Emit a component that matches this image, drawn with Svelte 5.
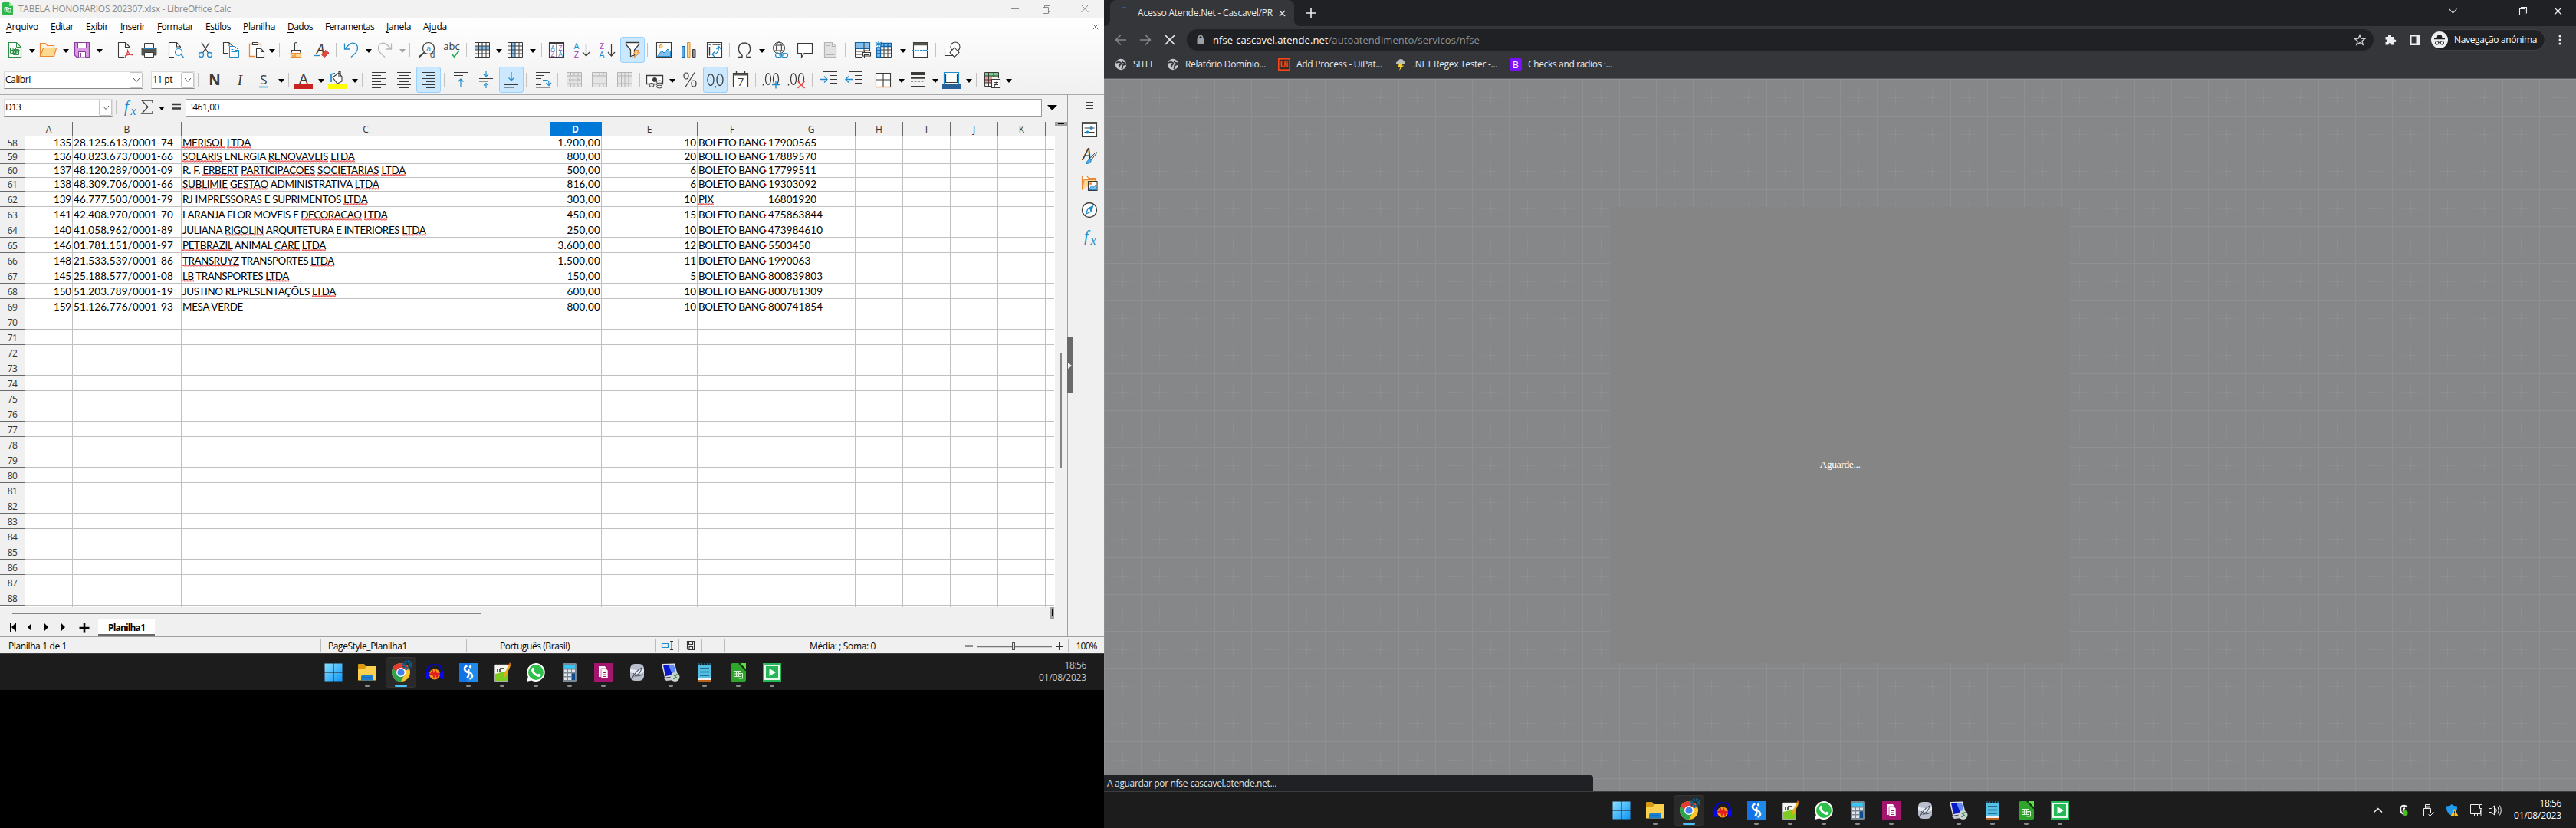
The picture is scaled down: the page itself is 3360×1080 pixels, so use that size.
<script>
  // Spreads or tightens letters so a label fills the given width.
  function fit(node, width) {
    const natural = node.getBoundingClientRect().width;
    const n = node.textContent.length;
    if (width && n) node.style.letterSpacing = `${(width - natural) / n}px`;
  }

  // Turns centre positions into flow margins.
  function layout(items, start) {
    let x = start;
    return items.map(([kind, centre, active]) => {
      const w = kind === 'sep' ? 1 : kind === 'drop' || kind === 'dropoff' ? 8 : 32;
      const left = centre - w / 2;
      const gap = left - x;
      x = left + w;
      return { kind, gap, active };
    });
  }

  const D = '#3a3a38', B = '#1e8bcd', G = '#b4b4b4';
  const s = (c, d, w = 1, f = 'none') => `<path d="${d}" fill="${f}" stroke="${c}" stroke-width="${w}"/>`;
  const t = (x, y, size, c, str, extra = '') => `<text x="${x}" y="${y}" font-size="${size}" fill="${c}" text-anchor="middle" ${extra}>${str}</text>`;
  const serif = 'font-family="Liberation Serif" font-style="italic"';

  const icons = {
    new: s('#2f8f46', 'M4.5 2.500H14.500L20.500 8.500V21.500H4.500Z', 1.2, '#fff') + s('#2f8f46', 'M14.500 2.500V8.500H20.500') + s('#2f8f46', 'M6.500 9.500H13.500V16.500H6.500ZM6.500 12.500H18.500M10 9.500V17M10.500 11.500H17.500V18.500H10.500ZM14 11.500V18.500M10.500 15H17.500'),
    open: s('#ed8733', 'M2.500 20.500V3.500H9.500L11.500 6.500H20.500V9.500', 1.2, '#fdf3e0') + s('#ed8733', 'M2.500 20.500L6.500 9.500H23.500L20.500 20.500Z', 1.2, '#fbd98f'),
    save: s('#8b3d9c', 'M2.500 2.500H21.500V21.500H5L2.500 19Z', 1.2, '#d99be4') + s('#8b3d9c', 'M6.500 2.500H17.500V9.500H6.500Z', 1, '#fff') + s('#8b3d9c', 'M7.500 21.500V14.500H16.500V21.500M10.500 16V21', 1, '#fff'),
    pdf: s(D, 'M3.500 21.500V2.500H12.500L18.500 8.500V13M3.500 21.500H11M12.500 2.500V8.500H18.500', 1.1, '#fff') + s('#d93a3a', 'M12 22C14 19 16 14 15.500 11.500M15.500 12C16 16 18 18.500 22 19M12 20C15 18 18 17.500 22 18.500', 1.2),
    print: s(D, 'M6.500 9V3.500H18.500V9') + s('#56544e', 'M3 9.500H22V19H3Z', 1, '#56544e') + s(B, 'M5 10H20', 1.8) + s(D, 'M6.500 15.500H18.500V21.500H6.500Z', 1, '#fff'),
    preview: s(D, 'M10 21.500H3.500V2.500H13.500L18.500 8V10M13.500 2.500V8H18.500', 1.1, '#fff') + `<circle cx="16" cy="15" r="4.500" fill="#fff" stroke="${B}" stroke-width="1.200"/>` + s(B, 'M19 18L22.500 22', 1.4),
    cut: s(D, 'M7 2.500L15.500 16M17 2.500L8.500 16', 1.3) + `<circle cx="6.500" cy="18.500" r="3" fill="none" stroke="${B}" stroke-width="1.300"/><circle cx="17.500" cy="18.500" r="3" fill="none" stroke="${B}" stroke-width="1.300"/>`,
    copy: s(D, 'M8.500 16.500H2.500V2.500H9.500L14.500 7', 1.1, '#fff') + s(D, 'M10 2.500V7') + s(B, 'M10.500 7.500H17.500L22.500 12.500V21.500H10.500ZM17.500 7.500V12.500H22.500M12.500 11.500H15.500M12.500 14.500H20.500M12.500 17.500H20.500', 1, '#fff'),
    paste: s('#ed8733', 'M10 20.500H3.500V4.500H18.500V8', 1.3, '#fff') + s(D, 'M7.500 5.500V2.500H14.500V5.500Z', 1.1, '#fff') + s(D, 'M12.500 10.500H18.500L22.500 14.500V21.500H12.500ZM18.500 10.500V14.500H22.500', 1.1, '#fff'),
    clone: s(D, 'M10.500 12V4C10.500 2 13.500 2 13.500 4V12M6.500 15.500V12.500H17.500V15.500', 1.1, '#fff') + s('#ed8733', 'M5.500 21.500V16.500H18.500V21.500ZM11 18V21.500M8 19V21.500', 1.2, '#fbd98f'),
    clear: t(11, 17, 18, D, 'A', 'font-style="italic"') + s(B, 'M2.500 19.500H10', 1.3) + s('#d93a3a', 'M12.500 18.500L17.500 12.500L22 16L16.500 21.500Z', 1, '#e04848'),
    undo: s(B, 'M3.500 3.500V11H11M4 10.500L10 4.500C14 1.500 20 3.500 20.500 9C20.800 14 17 17 12 21.500', 1.3),
    redo: s(G, 'M20.500 3.500V11H13M20 10.500L14 4.500C10 1.500 4 3.500 3.500 9C3.200 14 7 17 12 21.500', 1.3),
    find: `<circle cx="14" cy="10" r="7.500" fill="none" stroke="${D}" stroke-width="1.200"/>` + s(D, 'M8.500 15.500L1.500 21.500', 2) + t(14, 13.500, 11, B, 'a') + t(19, 22, 11, D, 'd'),
    spell: t(12, 12, 13, D, 'abc') + s('#18ab50', 'M12 17L15.500 21L22 13', 1.7),
    row: s('#83beec', 'M2 7H22V12H2Z', 0, '#83beec') + s(D, 'M2.500 2.500H21.500V21.500H2.500ZM2.500 7H21.500M2.500 12H21.500M2.500 17H21.500M7.500 2.500V21.500M12 2.500V21.500M17 2.500V21.500'),
    col: s('#83beec', 'M7 2H12V22H7Z', 0, '#83beec') + s(D, 'M2.500 2.500H21.500V21.500H2.500ZM2.500 7H21.500M2.500 12H21.500M2.500 17H21.500M7.500 2.500V21.500M12 2.500V21.500M17 2.500V21.500'),
    sort: s(D, 'M2.500 2.500H21.500V21.500H2.500ZM12 4V21.500', 1.1, '#fff') + s(D, 'M2.500 3.500H21.500', 2) + t(7, 13, 9, B, 'A') + t(7, 21, 9, '#a13fb5', 'Z') + t(17, 13, 9, '#a13fb5', 'Z') + t(17, 21, 9, B, 'A'),
    az: t(5, 11, 11, B, 'A') + t(5, 22, 11, '#a13fb5', 'Z') + s(D, 'M17.500 4V19M13 15L17.500 20L22 15', 1.2),
    za: t(5, 11, 11, '#a13fb5', 'Z') + t(5, 22, 11, B, 'A') + s(D, 'M17.500 4V19M13 15L17.500 20L22 15', 1.2),
    filter: s(D, 'M3.500 2.500H20.500V5L14.500 12V19L9.500 20.500V12L3.500 5Z', 1.3, '#fff') + s('#ed8733', 'M16 12.500H20.500L18.500 16H21.500L14 22L16 17.500H13.500Z', 1, '#fbd98f'),
    image: s(D, 'M2.500 2.500H21.500V21.500H2.500Z', 1.1, '#fff') + s(B, 'M3.500 20.500L9 13L12 16L17 11L20.500 14.500V20.500Z', 1, '#83beec') + `<circle cx="8" cy="7.500" r="2" fill="#fbd98f" stroke="#ed8733"/>`,
    chart: s('#0f63a8', 'M3.500 7.500H7V21.500H3.500Z', 1, '#5aa8de') + s('#ed8733', 'M10.500 2.500H14V21.500H10.500Z', 1, '#fbd98f') + s(D, 'M17.500 11.500H21V21.500H17.500Z', 1, '#8a8a86'),
    pivot: s(D, 'M2.500 2.500H21.500V21.500H2.500Z', 1.1, '#fff') + s(D, 'M4.500 5H7M9.500 5H19.500M5.500 8V19.500', 1.4) + s(B, 'M9.500 18C14 18 17.500 15 17.500 8M14.500 11L17.500 7.500L20.500 11M12 14.500L9 18L12 21', 1.2),
    omega: s(D, 'M3 21.500H9V19C2 14 3 3 12 3S22 14 15 19V21.500H21', 1.4),
    link: `<circle cx="11" cy="9.500" r="7.500" fill="none" stroke="${D}"/><ellipse cx="11" cy="9.500" rx="3.500" ry="7.500" fill="none" stroke="${D}"/>` + s(D, 'M3.500 9.500H18.500M4.500 6H17.500M4.500 13H17.500') + `<rect x="6.500" y="16.500" width="8" height="5" rx="2.500" fill="#fff" stroke="${B}" stroke-width="1.200"/><rect x="14.500" y="16.500" width="8" height="5" rx="2.500" fill="#fff" stroke="${B}" stroke-width="1.200"/>` + s(B, 'M11 19H18', 1.2),
    comment: s(D, 'M2.500 3.500H21.500V16.500H11L7.500 21.500V16.500H2.500Z', 1.2, '#fff'),
    header: s(G, 'M4.500 2.500H14.500L19.500 7.500V21.500H4.500ZM14.500 2.500V7.500H19.500M6.500 6.500H12M6.500 18.500H17.500', 1.2, '#e2e2e2'),
    prange: s('#0f63a8', 'M2.500 2.500H21.500V10.500H2.500Z', 1.2, '#83beec') + s(D, 'M2.500 10.500V21.500H11M2.500 14H14M2.500 18H11M7.500 10.500V21.500M14 2.500V14M21.500 10.500V13') + s(D, 'M12.500 15.500H22.500V20H12.500ZM14.500 13H20.500V15.500H14.500ZM14.500 18.500H20.500V22.500H14.500Z', 1.1, '#fff'),
    freeze: s(D, 'M7.500 7.500H21.500V21.500H7.500M7.500 12H21.500M7.500 17H21.500M12 3V21.500M17 3V21.500') + s('#0f63a8', 'M8 3.500H21.500V7.500H8ZM2.500 9H7.500V21.500H2.500ZM12 3.500V7.500M17 3.500V7.500M2.500 13H7.500M2.500 17H7.500', 1.3, '#83beec') + s(B, 'M5 0V9M1 2L9 7M9 2L1 7', 1.2),
    split: s(D, 'M3.500 12V2.500H21.500V12M3.500 14V21.500H21.500V14', 1.1, '#fff') + s('#56544e', 'M3.500 4.500H21.500', 3.5) + `<path d="M1.500 12.500H23" stroke="${B}" stroke-width="1.200" stroke-dasharray="2.500 1"/>`,
    shapes: s(D, 'M2.500 9.500H12.500V19.500H2.500Z', 1.1, '#fff') + `<circle cx="16" cy="8" r="6" fill="#fff" stroke="${D}" stroke-width="1.100"/>` + s(D, 'M15 9L21 15.500L15 21.500L9 15.500Z', 1.1, '#fff'),
    bold: t(12, 19, 19, D, 'N', 'font-weight="700"'),
    italic: t(12, 19, 19, D, 'I', serif),
    under: t(12, 18, 17, D, 'S') + s(B, 'M6 21.500H18', 1.6),
    acolor: t(12, 17, 18, D, 'A') + '<rect x="0" y="18" width="24" height="6" fill="#c9211e"/>',
    hilite: '<rect x="0" y="18" width="24" height="6" fill="#ffff00"/>' + s(D, 'M6 9L14 3L18 8V14L12 17ZM14 8V1.500H16V8', 1.1, '#fff') + s(B, 'M4 15V5L9 3.500', 1.7),
    al: s(D, 'M3 2.500H21M3 6.500H15M3 10.500H21M3 14.500H15M3 18.500H21M3 22.500H15', 1.2),
    ac: s(D, 'M3 2.500H21M6 6.500H18M3 10.500H21M6 14.500H18M3 18.500H21M6 22.500H18', 1.2),
    ar: s(D, 'M3 2.500H21M9 6.500H21M3 10.500H21M9 14.500H21M3 18.500H21M9 22.500H21', 1.2),
    vt: s(D, 'M3 2.500H21M3 6.500H15', 1.2) + s(B, 'M12 22V11M8.500 14.500L12 11L15.500 14.500', 1.2),
    vm: s(D, 'M3 10.500H21M3 14H15', 1.2) + s(B, 'M12 1V8M9 5L12 8L15 5M12 23V16.500M9 19.500L12 16.500L15 19.500', 1.2),
    vb: s(D, 'M3 18.500H21M3 22H15', 1.2) + s(B, 'M12 2V13M8.500 9.500L12 13L15.500 9.500', 1.2),
    wrap: s(D, 'M3 2.500H21M3 6.500H14M3 10.500H10M3 18.500H10M3 22H21', 1.2) + s(B, 'M12 12.500H17C20 12.500 20 14 20 19M16.500 16L20 19.500L23 16', 1.2),
    m1: s(G, 'M2.500 2.500H21.500V21.500H2.500ZM2.500 7H21.500M2.500 17H21.500M7.500 2.500V7M12 2.500V7M17 2.500V7M7.500 17V21.500M12 17V21.500M17 17V21.500M5 12H19M8 9.500L5 12L8 14.500M16 9.500L19 12L16 14.500', 1, '#e4e4e4'),
    m2: s(G, 'M2.500 2.500H21.500V21.500H2.500ZM2.500 7H21.500M2.500 17H21.500M7.500 2.500V7M12 2.500V7M17 2.500V7M7.500 17V21.500M12 17V21.500M17 17V21.500', 1, '#e4e4e4'),
    m3: s(G, 'M2.500 2.500H21.500V21.500H2.500ZM2.500 7H21.500M2.500 17H21.500M7.500 2.500V21.500M12 2.500V21.500M17 2.500V21.500', 1, '#e4e4e4'),
    money: s(D, 'M1.500 6.500H22.500V17.500H1.500Z', 1.3, '#fff') + `<circle cx="12" cy="12" r="3" fill="${D}"/><ellipse cx="8" cy="19" rx="3" ry="2.500" fill="#ddd" stroke="${D}"/><ellipse cx="18" cy="15" rx="3.500" ry="2" fill="#fff" stroke="${D}"/><ellipse cx="18" cy="18" rx="3.500" ry="2" fill="#fff" stroke="${D}"/><ellipse cx="18" cy="21" rx="3.500" ry="2" fill="#fff" stroke="${D}"/>`,
    pct: s(D, 'M18 2.500L6 21.500', 1.2) + `<ellipse cx="7" cy="7" rx="3" ry="4" fill="none" stroke="${D}" stroke-width="1.200"/><ellipse cx="17" cy="17" rx="3" ry="4" fill="none" stroke="${D}" stroke-width="1.200"/>`,
    num: `<ellipse cx="6" cy="12" rx="4" ry="7.500" fill="none" stroke="${D}" stroke-width="1.300"/><ellipse cx="18" cy="12" rx="4" ry="7.500" fill="none" stroke="${D}" stroke-width="1.300"/>` + s(D, 'M12 20V22.500', 1.5),
    date: s(D, 'M2.500 3.500H21.500V21.500H2.500Z', 1.2, '#fff') + s('#56544e', 'M2.500 5H21.500', 3) + s(D, 'M6.500 1V4M17.500 1V4', 1.4) + t(12, 20, 15, D, '7'),
    dadd: `<ellipse cx="8" cy="11" rx="3.500" ry="7.500" fill="none" stroke="${D}" stroke-width="1.200"/><ellipse cx="18" cy="11" rx="3.500" ry="7.500" fill="none" stroke="${D}" stroke-width="1.200"/>` + s(D, 'M1.500 17V19.500', 1.5) + s(B, 'M18 13.500V23.500M13 18.500H23', 1.4),
    ddel: `<ellipse cx="8" cy="11" rx="3.500" ry="7.500" fill="none" stroke="${D}" stroke-width="1.200"/><ellipse cx="18" cy="11" rx="3.500" ry="7.500" fill="none" stroke="${D}" stroke-width="1.200"/>` + s(D, 'M1.500 17V19.500', 1.5) + s('#ee4444', 'M13.500 14L22.500 23M22.500 14L13.500 23', 1.5),
    ind: s(D, 'M5 1.500H23M13 6.500H23M13 11.500H23M13 16.500H23M5 21.500H23', 1.2) + s(B, 'M1 11.500H10M6 7.500L10 11.500L6 15.500', 1.3),
    outd: s(D, 'M5 1.500H23M13 6.500H23M13 11.500H23M13 16.500H23M5 21.500H23', 1.2) + s(B, 'M1 11.500H10M5 7.500L1 11.500L5 15.500', 1.3),
    border: s(D, 'M2.500 21V3.500H21.500V21M12 3.500V21M2.500 12H21.500', 1.1, '#fff') + s('#ed8733', 'M2 21.500H22', 1.4),
    lstyle: s(D, 'M3 4H21', 4) + s(D, 'M3 9.500H21', 2.5) + `<path d="M3 14H21" stroke="${D}" stroke-dasharray="3 1.500"/>` + s(D, 'M3 21H21', 2) + `<path d="M3 17.500H21" stroke="${D}" stroke-dasharray="1.500 1"/>`,
    bcolor: s(B, 'M2.500 2.500H21.500V18H2.500Z', 1.2, '#fff') + s(D, 'M4.500 4.500H19.500V15.500H4.500Z', 1.2) + '<rect x="0" y="18" width="24" height="6" fill="#2a6099"/>',
    cond: s('#7fc98f', 'M3 3H21V8H3Z', 0, '#7fc98f') + s('#f08a8a', 'M3 8H12V16H3Z', 0, '#f49a9a') + s(D, 'M2.500 2.500H20.500V10M2.500 2.500V20.500H10M2.500 7H20.500M2.500 12H12M2.500 16H10M7.500 2.500V20.500M14 2.500V9') + s(D, 'M11.500 11.500H22.500V22.500H11.500Z', 1.1, '#fff') + s(D, 'M14 15.500H20M14 18.500H20M19 13L15 21'),
    fx: t(8, 18, 21, B, 'f', serif) + t(17, 22, 16, B, 'x', serif),
    sigma: s(D, 'M19 6V3H5L13 11.500L5 20H19V17', 1.3),
    eq: s(D, 'M6 9H18M6 14.500H18', 2.4),
    burger: s(D, 'M7 7.500H17M7 11.500H17M7 15.500H17', 1.2),
    props: s(D, 'M2.500 2.500H21.500V21.500H2.500Z', 1.1, '#fff') + s('#56544e', 'M2.500 3.500H21.500', 3) + s(D, 'M5.500 10H18.500M5.500 15.500H18.500') + `<circle cx="14.500" cy="10" r="2" fill="${B}"/><circle cx="9.500" cy="15.500" r="2" fill="${B}"/>`,
    styles: t(9, 17, 21, D, 'A', 'font-style="italic"') + s(D, 'M22 7L14 17L12 15.500L20 7Z', 1, '#fff') + s(B, 'M14 16C12 15 9 17 7.500 21.500C12 22 15 19 14 16Z', 1, '#5aa8de'),
    gallery: s('#ed8733', 'M2.500 20.500V2.500H8.500L11 5.500H20.500V9', 1.2, '#fff') + s('#ed8733', 'M2.500 20.500L5 7.500H20V10', 1.1, '#fbd98f') + s(D, 'M10.500 9.500H22V21.500H10.500Z', 1.1, '#fff') + s(B, 'M11.500 20.500L15 15L17 17.500L19.500 14.500L21 17V20.500Z', 1, '#83beec') + '<circle cx="13.500" cy="12.500" r="1.500" fill="#ed8733"/>',
    nav: `<circle cx="12" cy="12" r="9.500" fill="#fff" stroke="${D}" stroke-width="1.300"/>` + s(B, 'M16.500 7L14 14L7.500 17L10 10Z', 1.3, '#fff') + `<path d="M16.500 7L14 14L10 10Z" fill="${B}"/><circle cx="12" cy="12" r="1" fill="#fff"/>`
  };

  const app = {
    win: '<defs><linearGradient id="w" x1="0" y1="0" x2="1" y2="1"><stop offset="0" stop-color="#8be0ff"/><stop offset="1" stop-color="#0f95f5"/></linearGradient></defs><path fill="url(#w)" d="M.500 .500H11.500V11.500H.500ZM12.500 .500H23.500V11.500H12.500ZM.500 12.500H11.500V23.500H.500ZM12.500 12.500H23.500V23.500H12.500Z"/>',
    folder: '<path fill="#d79a12" d="M0 2Q0 1 1 1H8L10 4V8H0Z"/><path fill="#fdd04e" d="M0 7H9L11 4H24V22.500H0Z"/><path fill="#1a7fd0" d="M4 22.500V18Q4 15.500 6.500 15.500H17.500Q20 15.500 20 18V22.500Z"/><path fill="#0f5fa8" d="M7 18.500H17V20H7Z"/>',
    chrome: '<circle cx="12" cy="12" r="12" fill="#fbc52c"/><path fill="#e23b30" d="M12 0A12 12 0 0 0 1.600 6L6.800 15L12 7H22.500A12 12 0 0 0 12 0Z"/><path fill="#2fa24f" d="M1.600 6A12 12 0 0 0 12 24L17 14.500L7.500 14Z"/><circle cx="12" cy="12" r="6" fill="#fff"/><circle cx="12" cy="12" r="4.600" fill="#3f82ee"/><circle cx="20.500" cy="2.500" r="4.600" fill="none" stroke="#0b5c86" stroke-width="4" stroke-dasharray="2.400 1.200"/>',
    audacity: '<path d="M2 15V12Q2 2 12 2T22 12V15" fill="none" stroke="#0606c8" stroke-width="2.200"/><ellipse cx="12" cy="14.500" rx="7" ry="7" fill="#f39a1c"/><path d="M5 14H8L9 11L11 17L13 11L15 17L16 14H19" stroke="#e0201c" stroke-width="2.500" fill="none"/><rect x="0" y="11" width="5" height="10" rx="2.500" fill="#0707e8"/><rect x="19" y="11" width="5" height="10" rx="2.500" fill="#0707e8"/>',
    ess: '<rect width="24" height="24" fill="#1273e6"/><path fill="#2a9af0" d="M14 0H24V24H10Z" opacity=".6"/><path d="M10.500 3.500Q6.500 4.500 7 8Q7.500 10.500 11 12Q14 13.500 10.500 19.500M13.500 20.500Q17.500 19.500 17 16Q16.500 13.500 13.500 12Q10.500 10.500 13 8" fill="none" stroke="#fff" stroke-width="2.500"/><circle cx="14.500" cy="4.800" r="1.700" fill="#fff"/>',
    npp: '<path fill="#f4f4f0" d="M2 2H20V24H2Z"/><path fill="#7ecb22" d="M3 14L19 10V23H3Z"/><path d="M3 2H20M2 2V24H20" stroke="#666" fill="none"/><path d="M6 7V12M9 7V12M9 7H14" stroke="#222" stroke-width="1.500" fill="none"/><path d="M22.500 1L15 17.500" stroke="#e9a91c" stroke-width="3"/><path d="M21.500 3L23 0" stroke="#c35a20" stroke-width="3"/>',
    whats: '<path fill="#fff" d="M12 0A12 12 0 1 1 6 22.500L0 24L1.800 18A12 12 0 0 1 12 0Z"/><circle cx="12" cy="12" r="10" fill="#2fbf4b"/><path fill="#fff" d="M7.500 6Q9 5 10 7.500Q10.500 9 9.300 10Q11 13.500 14.300 14.800Q15.500 13 17 14Q19 15 18.500 16Q17 19.500 12.500 17Q7 14 6 9.500Q6 7.500 7.500 6Z"/>',
    calc: '<rect x="3" y="0" width="18" height="24" rx="1.500" fill="#7a8894"/><rect x="5" y="2" width="14" height="4.500" fill="#35c6f4"/><path fill="#dfe5ea" d="M5 8.500H9V12H5ZM10 8.500H14V12H10ZM15 8.500H19V12H15ZM5 13.500H9V17H5ZM10 13.500H14V17H10ZM5 18.500H9V22H5ZM10 18.500H14V22H10Z"/><path fill="#0f4d92" d="M15 13.500H19V22H15Z"/>',
    docs: '<rect width="24" height="24" fill="#a3156f"/><path fill="#fff" d="M6 4H14L16 7V18H6Z"/><path fill="#fff" stroke="#a3156f" stroke-width=".600" d="M9 7H15.500L18 9.500V20H9Z"/><path stroke="#a3156f" d="M11 12.500H16M11 15H16M11 17.500H16"/>',
    db: '<rect x="3" y="1" width="18" height="22" rx="6" fill="#b9bfcb"/><path fill="#e7eaf0" d="M3 7Q12 11 21 7V12Q12 16 3 12Z"/><path d="M5 21Q10 10 18 6Q17 13 10 17Q15 17 20 15M10 17L7 13" fill="none" stroke="#555c6c" stroke-width="1.200"/>',
    remote: '<path fill="#dcdfe6" d="M0 1L17 .500L21 16L4 19Z"/><path fill="#0a18c8" d="M2 2.500L15.500 2L19 14.500L5 17Z"/><path fill="#5f8cf5" d="M9 2.200L15.500 2L19 14.500L14 15Z"/><path fill="#c7cad2" d="M3 20L14 18L16 22L6 23Z"/><circle cx="17.500" cy="18" r="6" fill="#cfd3d6"/><path d="M15.500 15L18.500 18L15.500 21M20.500 14L17.500 17L20.500 20" stroke="#2d9a3c" stroke-width="1.300" fill="none"/>',
    note: '<path fill="#55bfe3" d="M3 2H21V20H3Z"/><path fill="#f1f1f1" d="M3 19.500H21V22H3Z"/><path fill="#b5611a" d="M3 22H21V24H3Z"/><path stroke="#0f5676" stroke-width="1.500" d="M6 7H18M6 11.500H18M6 16H18"/><path stroke="#166a8e" stroke-width="1.500" d="M5 0V3M8.500 0V3M12 0V3M15.500 0V3M19 0V3"/>',
    lo: '<path fill="#2fa52c" d="M5 0H13L22 10V22Q22 24 20 24H4Q2 24 2 22V3Q2 0 5 0Z"/><path fill="#62dd3f" d="M14 0H22V8Z"/><path stroke="#103a10" stroke-width="2" d="M13 0L22 9.500"/><path d="M6.500 10.500H15.500V17.500H6.500ZM6.500 14H15.500M9.500 10.500V17.500M12.500 10.500V17.500M12.500 13.500H17.500V20H12.500" fill="none" stroke="#dcf5d8"/>',
    play: '<rect width="24" height="24" fill="#26b757"/><rect x="3" y="3" width="18" height="18" fill="none" stroke="#fff" stroke-width="1.800"/><path fill="#fff" d="M8.500 7L17 12L8.500 17Z"/>'
  };
  const taskApps = [['win', 0], ['folder', 1], ['chrome', 2], ['audacity', 0], ['ess', 1], ['npp', 1], ['whats', 1], ['calc', 1], ['docs', 1], ['db', 0], ['remote', 1], ['note', 1], ['lo', 1], ['play', 1]];

  const bar1 = layout([['new', 19], ['drop', 42], ['open', 62], ['drop', 86], ['save', 107], ['drop', 130], ['sep', 139.5], ['pdf', 163], ['print', 194], ['preview', 229], ['sep', 246.5], ['cut', 268], ['copy', 301], ['paste', 334], ['drop', 355], ['sep', 364.5], ['clone', 386], ['clear', 419], ['sep', 438.5], ['undo', 458], ['drop', 481], ['redo', 502], ['dropoff', 525], ['sep', 534.5], ['find', 557], ['spell', 589], ['sep', 608.5], ['row', 629], ['drop', 651], ['col', 672], ['drop', 695], ['sep', 706.5], ['sort', 726], ['az', 759], ['za', 792], ['filter', 825, 1], ['sep', 844.5], ['image', 866], ['chart', 898], ['pivot', 932], ['sep', 951.5], ['omega', 971], ['drop', 994], ['link', 1017], ['comment', 1050], ['header', 1083], ['sep', 1102.5], ['prange', 1125], ['freeze', 1153], ['drop', 1178], ['split', 1200], ['sep', 1220.5], ['shapes', 1242]], 0);
  const bar2 = layout([['sep', 258.5], ['bold', 280], ['italic', 313], ['under', 344], ['drop', 367], ['sep', 376.5], ['acolor', 396], ['drop', 419], ['hilite', 440], ['drop', 463], ['sep', 472.5], ['al', 494], ['ac', 527], ['ar', 559, 1], ['sep', 579.5], ['vt', 601], ['vm', 634], ['vb', 667, 1], ['sep', 686.5], ['wrap', 708], ['sep', 727.5], ['m1', 749], ['m2', 782], ['m3', 815], ['sep', 834.5], ['money', 854], ['drop', 877], ['pct', 900], ['num', 933, 1], ['date', 966], ['sep', 985.5], ['dadd', 1006], ['ddel', 1039], ['sep', 1059.5], ['ind', 1081], ['outd', 1114], ['sep', 1133.5], ['border', 1152], ['drop', 1176], ['lstyle', 1197], ['drop', 1220], ['bcolor', 1241], ['drop', 1264], ['sep', 1273.5], ['cond', 1294], ['drop', 1316]], 254);

  // label before, access key, label after, width
  const menus = [['', 'A', 'rquivo', 42], ['', 'E', 'ditar', 30], ['E', 'x', 'ibir', 29], ['', 'I', 'nserir', 32], ['', 'F', 'ormatar', 47], ['E', 's', 'tilos', 33], ['', 'P', 'lanilha', 42], ['', 'D', 'ados', 33], ['Ferramen', 't', 'as', 64], ['', 'J', 'anela', 32], ['Aj', 'u', 'da', 31]];

  const cols = ['A', 'B', 'C', 'D', 'E', 'F', 'G', 'H', 'I', 'J', 'K', ''];
  const BB = 'BOLETO BANC';
  // Words starting with ~ carry the spelling underline.
  const data = [
    ['135', '28.125.613/0001-74', '~MERISOL ~LTDA', 89, '1.900,00', '10', BB, '17900565'],
    ['136', '40.823.673/0001-66', '~SOLARIS ENERGIA ~RENOVAVEIS ~LTDA', 224.5, '800,00', '20', BB, '17889570'],
    ['137', '48.120.289/0001-09', 'R. F. ~ERBERT ~PARTICIPACOES ~SOCIETARIAS ~LTDA', 291, '500,00', '6', BB, '17799511'],
    ['138', '48.309.706/0001-66', '~SUBLIMIE ~GESTAO ADMINISTRATIVA ~LTDA', 256.5, '816,00', '6', BB, '19303092'],
    ['139', '46.777.503/0001-79', 'RJ IMPRESSORAS E SUPRIMENTOS ~LTDA', 241.5, '303,00', '10', '~PIX', '16801920'],
    ['141', '42.408.970/0001-70', 'LARANJA FLOR MOVEIS E ~DECORACAO ~LTDA', 267.5, '450,00', '15', BB, '475863844'],
    ['140', '41.058.962/0001-89', 'JULIANA ~RIGOLIN ARQUITETURA E INTERIORES ~LTDA', 317.5, '250,00', '10', BB, '473984610'],
    ['146', '01.781.151/0001-97', '~PETBRAZIL ANIMAL ~CARE ~LTDA', 187, '3.600,00', '12', BB, '5503450'],
    ['148', '21.533.539/0001-86', '~TRANSRUYZ TRANSPORTES ~LTDA', 198, '1.500,00', '11', BB, '1990063'],
    ['145', '25.188.577/0001-08', '~LB TRANSPORTES ~LTDA', 139, '150,00', '5', BB, '800839803'],
    ['150', '51.203.789/0001-19', 'JUSTINO REPRESENTAÇÕES ~LTDA', 200, '600,00', '10', BB, '800781309'],
    ['159', '51.126.776/0001-93', 'MESA VERDE', 79, '800,00', '10', BB, '800741854']
  ];
  const rows = Array.from({ length: 31 }, (_, i) => {
    const r = data[i];
    return {
      n: 58 + i,
      short: i < 4,
      cells: r
        ? [[r[0], 23, 1], [r[1], 130], [r[2], r[3]], [r[4], r[4].length > 6 ? 55.5 : 43.5, 1], [r[5], r[5].length * 7.7, 1], [r[6], r[6] === BB ? 87 : 19.5], [r[7], r[7].length * 7.9], [''], [''], [''], [''], ['']]
        : cols.map(() => [''])
    };
  });
  const words = (str) => str.split(' ').map((w, i) => ({ sp: i ? ' ' : '', bad: w[0] === '~', w: w.replace('~', '') }));
</script>

{#snippet tools(list)}
  {#each list as it}
    {#if it.kind === 'sep'}
      <i class="sep" style="margin-left:{it.gap}px"></i>
    {:else if it.kind === 'drop' || it.kind === 'dropoff'}
      <i class="drop" class:off={it.kind === 'dropoff'} style="margin-left:{it.gap}px"></i>
    {:else}
      <span class="tool" class:active={it.active} style="margin-left:{it.gap}px">
        <svg viewBox="0 0 24 24">{@html icons[it.kind]}</svg>
      </span>
    {/if}
  {/each}
{/snippet}

{#snippet ico(name)}<svg class="ic" viewBox="0 0 24 24">{@html icons[name]}</svg>{/snippet}

{#snippet chev()}<span class="chev"><svg viewBox="0 0 10 10"><path d="M1 3L5 7.500L9 3" fill="none" stroke="#555" /></svg></span>{/snippet}

{#snippet apps()}
  <div class="apps">
    {#each taskApps as [name, state]}
      <div class="app" class:current={state === 2}>
        <svg viewBox="0 0 24 24">{@html app[name]}</svg>
        <i class="dot" class:none={!state} class:long={state === 2}></i>
      </div>
    {/each}
  </div>
{/snippet}

{#snippet globe()}<svg class="fav" viewBox="0 0 16 16"><circle cx="8" cy="8" r="7.200" fill="#c4c7cb" /><path d="M2 6Q5 4 8 6Q9 8 6 9Q7 11 5 12M10 3Q9 5 12 6Q14 6 14 8Q11 8 10 10Q11 12 9 14" fill="none" stroke="#35363a" stroke-width="1.800" /></svg>{/snippet}

<div class="desktop">
  <section class="left">
    <header class="title">
      <svg class="doc" viewBox="0 0 14 17"><path fill="#2db84b" d="M1 0H9L14 5V15Q14 17 12 17H2Q0 17 0 15V1Z" /><path fill="#8be29b" d="M9 0L14 5H9Z" /><path d="M3 6.500H8V12H3ZM3 9H8M5.500 6.500V12M7 8.500H11V13H7Z" fill="none" stroke="#fff" stroke-width=".800" /></svg>
      <span class="ttext" use:fit={277}>TABELA HONORARIOS 202307.xlsx - LibreOffice Calc</span>
      <svg class="wc" viewBox="0 0 110 16"><path d="M2 8.500H12M43.500 6.500H50.500V14.500H43.500ZM45.500 6V4.500H52.500V12.500H51M93.500 3.500L102.500 13M102.500 3.500L93.500 13" fill="none" stroke="#8b8b8b" /></svg>
    </header>
    <div class="chromebar">
      <nav class="menu">
        {#each menus as [a, k, b, w]}<span use:fit={w}>{a}<u>{k}</u>{b}</span>{/each}
        <svg class="mx" viewBox="0 0 10 10"><path d="M1 1L9 9M9 1L1 9" stroke="#444" /></svg>
      </nav>
      <div class="bar">{@render tools(bar1)}</div>
      <div class="bar second">
        <span class="combo font"><span use:fit={33}>Calibri</span>{@render chev()}</span>
        <span class="combo size"><span use:fit={26}>11 pt</span>{@render chev()}</span>
        {@render tools(bar2)}
      </div>
    </div>

    <div class="work">
      <div class="main">
        <div class="formula">
          <span class="combo name"><span use:fit={20}>D13</span>{@render chev()}</span>
          <i class="sep"></i>
          <span class="f1">{@render ico('fx')}</span>
          {@render ico('sigma')}
          <i class="drop"></i>
          <span class="f2">{@render ico('eq')}</span>
          <span class="input"><span use:fit={37}>'461,00</span></span>
          <i class="drop big"></i>
        </div>
        <div class="sheet">
          <div class="grid">
            <div class="row head">
              <span class="rh"></span>
              {#each cols as c}<span class="ch" class:sel={c === 'D'}>{c}</span>{/each}
            </div>
            {#each rows as r}
              <div class="row" class:short={r.short}>
                <span class="rh"><b use:fit={12.5}>{r.n}</b></span>
                {#each r.cells as [text, w, right]}
                  <span class="cell" class:right>
                    {#if text}
                      <span class="val" use:fit={w}>{#each words(text) as p}{p.sp}{#if p.bad}<em>{p.w}</em>{:else}{p.w}{/if}{/each}</span>
                      {#if text === BB}<i class="more"></i>{/if}
                    {/if}
                  </span>
                {/each}
              </div>
            {/each}
            <div class="row tail"><span class="rh"></span>{#each cols as c}<span class="cell"></span>{/each}</div>
          </div>
          <div class="vscroll"><i class="splith"></i><i class="vthumb"></i></div>
        </div>
        <div class="hscroll"><i class="hthumb"></i><i class="splitv"></i></div>
        <div class="tabs">
          <svg class="navs" viewBox="0 0 80 16"><path d="M1.500 2V14M75.500 2V14" stroke="#000" /><path d="M9 2V14L3 8ZM29 3V13L24 8ZM45 2L51 8L45 14ZM67 2L73 8L67 14Z" /></svg>
          <svg class="plus" viewBox="0 0 14 14"><path d="M7 .500V13.500M.500 7H13.500" stroke="#000" stroke-width="2.600" /></svg>
          <span class="tab"><b use:fit={48}>Planilha1</b></span>
        </div>
      </div>
      <aside>
        <span class="s0">{@render ico('burger')}</span>
        {@render ico('props')}{@render ico('styles')}{@render ico('gallery')}{@render ico('nav')}{@render ico('fx')}
        <i class="handle"></i>
      </aside>
    </div>

    <footer class="status">
      <span class="c1"><span use:fit={76}>Planilha 1 de 1</span></span>
      <span class="c2"></span>
      <span class="c3"><span use:fit={103}>PageStyle_Planilha1</span></span>
      <span class="c4"><span use:fit={91}>Português (Brasil)</span></span>
      <span class="c5"></span>
      <span class="c6"><svg viewBox="0 0 18 14"><path d="M1.500 4.500H9.500V9.500H1.500Z" fill="none" stroke="#1e8bcd" stroke-width="1.200" /><path d="M12 1.500H16M12 12.500H16M14 1.500V12.500" stroke="#333" /></svg></span>
      <span class="c6"><svg viewBox="0 0 18 14"><path d="M4.500 1.500H13.500V12.500H5.500L4.500 11.500ZM6.500 1.500V5.500H11.500V1.500M7 12.500V8.500H11.500V12.500" fill="none" stroke="#333" stroke-width="1.100" /></svg></span>
      <span class="c6"></span>
      <span class="c7"><span use:fit={86}>Média: ; Soma: 0</span></span>
      <span class="c8"><svg viewBox="0 0 128 16"><path d="M1 7.500H11M119 8H129M124 3V13" stroke="#333" stroke-width="2" /><path d="M16 8.500H114" stroke="#777" stroke-width="1.500" /><rect x="62.500" y="3.500" width="3" height="9" fill="#ddd" stroke="#555" /></svg></span>
      <span class="c9"><span use:fit={27}>100%</span></span>
    </footer>
    <div class="taskbar dim">
      {@render apps()}
      <div class="clock"><span use:fit={28.5}>18:56</span><span use:fit={62}>01/08/2023</span></div>
    </div>
  </section>

  <section class="right-screen">
    <div class="strip">
      <div class="btab"><i class="spin"></i><span use:fit={176}>Acesso Atende.Net - Cascavel/PR</span><svg viewBox="0 0 10 10"><path d="M1 1L9 9M9 1L1 9" stroke="#e4e6e8" stroke-width="1.500" /></svg></div>
      <svg class="add" viewBox="0 0 12 12"><path d="M6 0V12M0 6H12" stroke="#eee" stroke-width="1.600" /></svg>
      <svg class="bwc" viewBox="0 0 150 16"><path d="M2.500 5.500L7.500 11L12.500 5.500M48 8.500H58M94.500 5.500H101.500V13.500H94.500ZM96 3.500H103.500V11.500M140 4L149 13M149 4L140 13" fill="none" stroke="#eee" stroke-width="1.100" /></svg>
    </div>
    <div class="nav">
      <svg class="arrows" viewBox="0 0 82 16"><path d="M15 8H2M8 1.500L1.500 8L8 14.500M33 8H46M40 1.500L46.500 8L40 14.500" fill="none" stroke="#85878a" stroke-width="1.600" /><path d="M66 2L78 14M78 2L66 14" stroke="#e8eaed" stroke-width="1.600" /></svg>
      <div class="omni">
        <svg class="lock" viewBox="0 0 10 14"><path d="M2.500 6V4Q2.500 1.500 5 1.500T7.500 4V6" fill="none" stroke="#9aa0a6" stroke-width="1.500" /><rect x=".500" y="5" width="9" height="7.500" rx="1" fill="#9aa0a6" /></svg>
        <span class="host" use:fit={150.5}>nfse-cascavel.atende.net</span><span class="path" use:fit={197.5}>/autoatendimento/servicos/nfse</span>
        <svg class="star" viewBox="0 0 16 16"><path d="M8 1.800L9.800 6.200L14.500 6.500L10.900 9.500L12.100 14.200L8 11.600L3.900 14.200L5.100 9.500L1.500 6.500L6.200 6.200Z" fill="none" stroke="#c9cbce" stroke-width="1.400" /></svg>
      </div>
      <svg class="puz" viewBox="0 0 16 16"><path fill="#eceef0" d="M1.500 4H5Q4.500 1 7 1T9 4H12.500V7.500Q15.500 7 15.500 9.200T12.500 11V14.500H9Q9.500 12 7.300 12T5.500 14.500H1.500V11Q4 11.500 4 9.300T1.500 7.500Z" /></svg>
      <svg class="panel" viewBox="0 0 16 16"><path fill="#eceef0" fill-rule="evenodd" d="M1 1H15V15H1ZM3.500 3.500V12.500H9.500V3.500Z" /></svg>
      <div class="incog"><svg viewBox="0 0 22 22"><circle cx="11" cy="11" r="11" fill="#eceef0" /><path fill="#202124" d="M7.500 8L8.500 4.500H13.500L14.500 8ZM4 9H18V10.200H4Z" /><path d="M9.700 14.500Q11 13.500 12.300 14.500" fill="none" stroke="#202124" /><circle cx="7.700" cy="15" r="2.200" fill="none" stroke="#202124" /><circle cx="14.300" cy="15" r="2.200" fill="none" stroke="#202124" /></svg><span use:fit={108}>Navegação anónima</span></div>
      <svg class="dots" viewBox="0 0 4 16"><circle cx="2" cy="3" r="1.500" fill="#eee" /><circle cx="2" cy="8" r="1.500" fill="#eee" /><circle cx="2" cy="13" r="1.500" fill="#eee" /></svg>
    </div>
    <div class="marks">
      <span class="mark">{@render globe()}<span use:fit={28}>SITEF</span></span>
      <span class="mark">{@render globe()}<span use:fit={105}>Relatório Domínio...</span></span>
      <span class="mark"><svg class="fav" viewBox="0 0 16 16"><rect x=".800" y=".800" width="14.400" height="14.400" fill="#3a2a26" stroke="#fa4616" stroke-width="1.600" /><text x="8" y="12" font-size="10.500" text-anchor="middle" fill="#fa4616" font-weight="700">Ui</text></svg><span use:fit={112}>Add Process - UiPat...</span></span>
      <span class="mark"><svg class="fav" viewBox="0 0 16 16"><path fill="#b9bcc0" d="M4 8Q1.500 8 2 5.500Q2.500 4 4.500 4Q5.500 .500 9 1Q11.500 1.500 12 4Q14.500 4 14 6.500Q13.500 8 12 8Z" /><path fill="#ffd12b" d="M6 6.500H11L9.500 9.500H12L6 16L7.500 11.500H4.500Z" /></svg><span use:fit={110}>.NET Regex Tester -...</span></span>
      <span class="mark"><svg class="fav" viewBox="0 0 16 16"><rect width="16" height="16" rx="2.500" fill="#7a12f8" /><text x="8" y="12.500" font-size="12" text-anchor="middle" fill="#fff">B</text></svg><span use:fit={110}>Checks and radios ·...</span></span>
    </div>
    <div class="page">
      <div class="modal"><span use:fit={53}>Aguarde...</span></div>
      <div class="bubble"><span use:fit={221}>A aguardar por nfse-cascavel.atende.net...</span></div>
    </div>
    <div class="taskbar">
      {@render apps()}
      <svg class="tray" viewBox="0 0 176 24" fill="none" stroke="#eee">
        <path d="M6.500 14.500L11.700 9.500L17 14.500" stroke-width="1.600" />
        <path d="M48 17Q41 17 41 11T47 6Q49 6 50 8M47 9Q44 10 45 14" stroke-width="2.200" />
        <circle cx="47.200" cy="15.500" r="3.400" fill="#49c31b" stroke="none" />
        <path d="M73.500 4.500H79.500V9H73.500ZM71.500 9.500H80.500V16M71.500 9.500V19.500H78M77.500 17L79.500 19.500L84.500 14.500M75.500 6.500H76.500M77.500 6.500H78.500" />
        <path d="M108 4Q111 7 115 6.500Q116 15 108 19Q100 15 101 6.500Q105 7 108 4Z" fill="#1f9cf0" stroke="none" />
        <path d="M111.500 10L116.500 19.500H106.500Z" fill="#fbc117" stroke="none" /><path d="M111.500 13V16.500M111.500 17.500V18.500" stroke="#222" />
        <path d="M143.500 4.500H132.500V16.500H145.500V11.500M137.500 16.500V19.500M141.500 16.500V19.500M135 19.500H144M144.500 4.500H147.500V9.500H144.500ZM146 9.500V19.500" />
        <path d="M156.500 9.500H159.500L163.500 6V18L159.500 14.500H156.500ZM165.500 9.500Q167 12 165.500 14.500M168 7.500Q170.500 12 168 16.500M170.500 5.500Q174 12 170.500 18.500" />
      </svg>
      <div class="clock"><span use:fit={28.5}>18:56</span><span use:fit={62}>01/08/2023</span></div>
    </div>
  </section>
</div>

<style>
  :global(body) { margin: 0; background: #000; overflow: hidden; }
  .desktop { display: flex; width: 3360px; height: 1080px; background: #000; font: 12px/16px 'Open Sans', 'Noto Sans', sans-serif; color: #000; }
  .desktop :global(svg) { display: block; flex: none; overflow: visible; }
  span { white-space: nowrap; }
  i { flex: none; }

  .left { width: 1440px; height: 900px; display: flex; flex-direction: column; background: #f0f0f0; overflow: hidden; }
  .left > * { flex: none; }
  .title { height: 23px; display: flex; align-items: center; background: #f2f2f2; color: #8c8c8c; box-sizing: border-box; padding-left: 3px; }
  .doc { width: 14px; height: 17px; }
  .ttext { margin-left: 7px; margin-top: 1px; }
  .wc { width: 110px; height: 16px; margin: 0 13px 2px auto; }
  .chromebar { height: 100px; border-bottom: 1px solid #aaa; background: linear-gradient(#fff, #f0f0f0); }
  .menu { height: 24px; display: flex; align-items: center; gap: 16px; padding-left: 8px; }
  .menu u { text-underline-offset: 3px; text-decoration-thickness: 1px; }
  .mx { width: 8px; height: 8px; margin: 0 7px 0 auto; }
  .bar { height: 36px; display: flex; align-items: center; }
  .second { margin-top: 3px; }
  .tool { width: 32px; height: 34px; flex: none; display: flex; align-items: center; justify-content: center; box-sizing: border-box; border: 1px solid transparent; border-radius: 3px; }
  .tool svg, .ic { width: 24px; height: 24px; }
  .active { background: #cce8ff; border-color: #99d1ff; }
  .sep { width: 1px; height: 18px; background: #c3c3c3; }
  .drop { width: 8px; height: 5px; margin-top: 3px; background: #000; clip-path: polygon(0 0, 100% 0, 50% 100%); }
  .off { background: #a5a5a5; }
  .combo { display: flex; align-items: center; justify-content: space-between; height: 23px; box-sizing: border-box; background: #fff; border: 1px solid #dcdcdc; border-bottom: 1px solid #8a8a8a; padding-left: 1px; flex: none; }
  .chev { width: 17px; height: 100%; box-sizing: border-box; border: 1px solid #c4c4c4; border-radius: 2px; display: flex; align-items: center; justify-content: center; }
  .chev svg { width: 10px; height: 10px; }
  .font { width: 182px; margin-left: 5px; }
  .size { width: 57px; margin-left: 10px; }

  .work { height: 706px; display: flex; }
  .main { width: 1392px; display: flex; flex-direction: column; }
  .main > * { flex: none; }
  .formula { height: 35px; display: flex; align-items: center; box-sizing: border-box; padding-bottom: 3px; }
  .name { width: 142px; margin: 0 4px 0 5px; }
  .f1 { margin: 0 -1px 0 5px; }
  .formula .drop { margin-left: 3px; }
  .f2 { margin: 0 1px 3px 3px; }
  .input { flex: 1; height: 23px; box-sizing: border-box; border: 1px solid #9a9a9a; background: #fff; display: flex; align-items: center; padding-left: 6px; margin-left: -1px; }
  .formula .big { width: 13px; height: 7px; margin: 1px 13px 0 7px; }

  .sheet { display: flex; height: 633px; }
  .grid { width: 1376px; background: #fff; display: flex; flex-direction: column; }
  .row { flex: none; display: grid; grid-template-columns: 33px 62px 142px 481px 67px 125px 91px 115px 62px 62px 62px 62px 11px; grid-template-rows: 100%; height: 20px; }
  .short { height: 18px; }
  .head { height: 19px; width: 1376px; background: #f0f0f0; }
  .head .rh, .ch { border-bottom: 1px solid #6a6a6a; border-right: 1px solid #6a6a6a; color: #333; text-align: center; line-height: 19px; box-sizing: border-box; height: 19px; }
  .ch:last-child { border-right: 0; }
  .ch.sel { background: #0078d7; color: #fff; font-weight: 700; margin-left: -1px; border-right-color: #0078d7; }
  .rh { background: #f0f0f0; border-right: 1px solid #6a6a6a; border-bottom: 1px solid #6a6a6a; color: #333; display: flex; align-items: center; justify-content: center; box-sizing: border-box; padding-top: 2px; }
  .short .rh { padding-top: 0; }
  .rh b { font-weight: 400; }
  .cell { border-right: 1px solid #c0c0c0; border-bottom: 1px solid #c0c0c0; box-sizing: border-box; display: flex; align-items: flex-end; padding: 0 1px; overflow: hidden; position: relative; font: 13.4px/17px Lato, sans-serif; min-width: 0; }
  .cell:last-child { border-right: 0; }
  .right { justify-content: flex-end; }
  .tail { height: 2px; }
  .tail .cell, .tail .rh { border-bottom: 0; background: #fff; padding-top: 0; }
  .tail .rh { border-right-color: #fff; }
  em {
    font-style: normal;
    background: url("data:image/svg+xml,%3Csvg xmlns='http://www.w3.org/2000/svg' width='4' height='3'%3E%3Cpath d='M-1 -.5L1 2L3 .5L5 2.500M-1 2.500L1 .5L3 2.500L5 .5' fill='none' stroke='%23e83030' stroke-width='.8'/%3E%3C/svg%3E") left bottom / 4px 3px repeat-x;
  }
  .more { position: absolute; right: 0; bottom: 5px; width: 4px; height: 6px; background: #b00000; clip-path: polygon(0 0, 100% 50%, 0 100%); }
  .vscroll { width: 16px; display: flex; flex-direction: column; align-items: center; }
  .splith { width: 16px; height: 5px; background: linear-gradient(#000, #000) center / 8px 1px no-repeat #a0a0a0; }
  .vthumb { width: 2px; height: 151px; margin-top: 296px; background: #858585; }
  .hscroll { height: 16px; display: flex; justify-content: space-between; }
  .hthumb { width: 612px; height: 2px; margin: 7px 0 0 16px; background: #858585; }
  .splitv { width: 5px; height: 17px; margin: -1px 17px 0 0; background: linear-gradient(#000, #000) center / 1px 9px no-repeat #a0a0a0; }
  .tabs { height: 22px; display: flex; align-items: center; }
  .navs { width: 80px; height: 16px; margin: 0 0 2px 12px; }
  .plus { width: 14px; height: 14px; margin: 0 11px 1px 11px; }
  .tab { width: 74px; height: 22px; box-sizing: border-box; padding-top: 2px; border-bottom: 3px solid #696969; background: #fff; display: flex; align-items: center; justify-content: center; }
  aside { width: 47px; flex: none; border-left: 1px solid #a0a0a0; position: relative; display: flex; flex-direction: column; align-items: center; gap: 11px; }
  aside > :global(svg) { margin-left: 8px; }
  .s0 { margin: 2px 0 -4px 8px; }
  .handle { position: absolute; left: -1px; top: 316px; width: 7px; height: 73px; background: #696969; }
  .handle::after { content: ''; display: block; width: 5px; height: 8px; margin: 0 0 0 1px; background: #f0f0f0; clip-path: polygon(0 0, 100% 50%, 0 100%); transform: translateY(33px); }

  .status { height: 22px; box-sizing: border-box; border-top: 1px solid #a0a0a0; display: flex; align-items: center; }
  .status > span { height: 16px; border-right: 1px solid #bbb; box-sizing: border-box; display: flex; align-items: center; justify-content: center; }
  .status > span > span { margin-top: 2px; }
  .status > .c1 { width: 165px; justify-content: flex-start; padding-left: 11px; }
  .c2 { width: 254px; }
  .status > .c3 { width: 190px; justify-content: flex-start; padding-left: 9px; }
  .c4 { width: 178px; }
  .c5 { width: 69px; }
  .c6 { width: 30px; }
  .c6 svg { width: 18px; height: 14px; }
  .c7 { width: 304px; padding-left: 3px; }
  .c8 { width: 144px; }
  .c8 svg { width: 128px; height: 16px; margin-top: 2px; }
  .status > .c9 { width: 46px; border: 0; }

  .taskbar { height: 48px; position: relative; flex: none; box-sizing: border-box; border-top: 1px solid #3d3d3d; background: #1c1c1c; display: flex; align-items: center; justify-content: flex-end; color: #fff; }
  .apps { position: absolute; left: calc(50% - 307px); top: 0; display: flex; height: 47px; align-items: center; }
  .app { width: 44px; height: 40px; display: flex; flex-direction: column; align-items: center; position: relative; }
  .app svg { width: 24px; height: 24px; margin-top: 8px; z-index: 1; }
  .current::before { content: ''; position: absolute; inset: 0 2px; background: #2a2a2a; border: 1px solid #343434; border-radius: 4px; box-sizing: border-box; }
  .dot { width: 6px; height: 3px; margin-top: 4px; border-radius: 2px; background: #8d8d8d; z-index: 1; }
  .none { background: transparent; }
  .long { width: 16px; background: #4cc2ff; }
  .clock { display: flex; flex-direction: column; align-items: flex-end; padding-right: 19px; margin-bottom: 1px; }
  .dim { color: #c6c6c6; }
  .dim .clock { padding-right: 23px; }
  .tray { width: 176px; height: 24px; margin-right: 13px; }

  .right-screen { width: 1920px; height: 1080px; display: flex; flex-direction: column; background: #35363a; color: #e8eaed; }
  .strip { height: 34px; background: #202124; display: flex; align-items: center; }
  .btab { width: 240px; height: 34px; margin-left: 8px; background: #35363a; border-radius: 8px 8px 0 0; display: flex; align-items: center; position: relative; }
  .btab::before, .btab::after { content: ''; position: absolute; bottom: 0; width: 8px; height: 8px; }
  .btab::before { left: -8px; background: radial-gradient(circle at 0 0, transparent 8px, #35363a 8px); }
  .btab::after { right: -8px; background: radial-gradient(circle at 100% 0, transparent 8px, #35363a 8px); }
  .spin { width: 5px; height: 2px; margin: -14px 15px 0 16px; background: #3a5488; }
  .btab svg { width: 9px; height: 9px; margin-left: 8px; }
  .add { width: 12px; height: 12px; margin-left: 16px; }
  .bwc { width: 150px; height: 16px; margin: 0 18px 6px auto; }
  .nav { height: 36px; display: flex; align-items: center; }
  .arrows { width: 82px; height: 16px; margin-left: 14px; }
  .omni { width: 1548px; height: 28px; margin-left: 12px; box-sizing: border-box; padding: 0 10px 0 13px; border-radius: 14px; background: #202124; display: flex; align-items: center; font-size: 13px; }
  .lock { width: 10px; height: 14px; margin-right: 11px; }
  .host { color: #fff; }
  .path { color: #8f9296; }
  .star { width: 16px; height: 16px; margin-left: auto; }
  .puz { width: 16px; height: 16px; margin-left: 14px; }
  .panel { width: 16px; height: 16px; margin-left: 16px; }
  .incog { width: 150px; height: 28px; margin-left: 12px; box-sizing: border-box; border: 1px solid #404246; border-radius: 14px; background: #202124; display: flex; align-items: center; gap: 8px; color: #fff; }
  .incog svg { width: 22px; height: 22px; }
  .dots { width: 4px; height: 16px; margin-left: 17px; }
  .marks { height: 33px; display: flex; align-items: center; padding: 0 0 4px 14px; border-bottom: 1px solid #5b5c5f; gap: 16px; box-sizing: border-box; }
  .mark { display: flex; align-items: center; gap: 8px; }
  .fav { width: 16px; height: 16px; }
  .page {
    flex: 1; position: relative; display: flex; justify-content: center;
    background:
      linear-gradient(90deg, #8f9092 1px, transparent 1px) 0 0 / 48px 48px,
      linear-gradient(#8f9092 1px, transparent 1px) 0 0 / 48px 48px,
      url("data:image/svg+xml,%3Csvg xmlns='http://www.w3.org/2000/svg' width='48' height='48'%3E%3Cdefs%3E%3CradialGradient id='g' gradientUnits='userSpaceOnUse' cx='24.500' cy='24.500' r='17'%3E%3Cstop offset='0' stop-color='%238f9092'/%3E%3Cstop offset='1' stop-color='%238f9092' stop-opacity='0'/%3E%3C/radialGradient%3E%3C/defs%3E%3Cpath fill='url(%23g)' d='M6 24h37v1H6zM24 6h1v37h-1z'/%3E%3C/svg%3E") 0 0 / 48px 48px,
      #868789;
  }
  .modal { width: 600px; height: 595px; margin-top: 167px; box-sizing: border-box; padding-top: 327px; background: #858585; text-align: center; font: 13.5px/18px 'Liberation Serif', serif; color: #fff; }
  .bubble { position: absolute; left: 0; bottom: 0; width: 638px; height: 21px; background: #202124; border-radius: 0 4px 0 0; display: flex; align-items: center; padding-left: 4px; box-sizing: border-box; color: #dfe1e4; }
</style>
